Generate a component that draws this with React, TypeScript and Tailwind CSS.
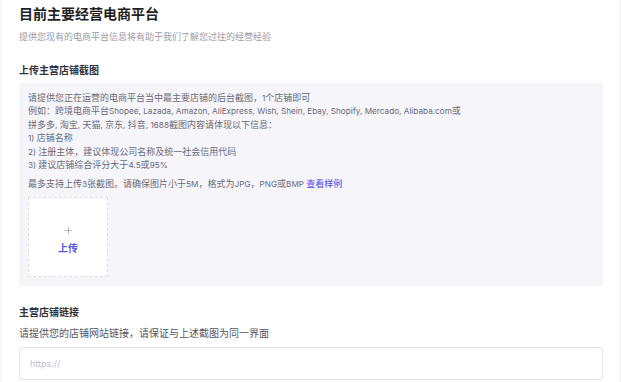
import { Plus } from 'lucide-react';

const lines = [
  '请提供您正在运营的电商平台当中最主要店铺的后台截图，1个店铺即可',
  '例如：跨境电商平台Shopee, Lazada, Amazon, AliExpress, Wish, Shein, Ebay, Shopify, Mercado, Alibaba.com或',
  '拼多多, 淘宝, 天猫, 京东, 抖音, 1688截图内容请体现以下信息：',
  '1) 店铺名称',
  '2) 注册主体，建议体现公司名称及统一社会信用代码',
  '3) 建议店铺综合评分大于4.5或95%',
];

// latin runs are set a touch smaller in Inter, like the original
function mix(text: string) {
  return text.split(/([A-Za-z0-9.,%() ]+)/).map((part, i) =>
    /^[A-Za-z0-9.,%() ]+$/.test(part) ? (
      <span key={i} className="font-['Inter',sans-serif] text-[8.2px] leading-[0]">
        {part}
      </span>
    ) : (
      part
    ),
  );
}

export default function App() {
  return (
    <div className="w-[621px] h-[382px] overflow-hidden bg-[#f5f5fa] px-[2px] font-['Inter','Noto_Sans_CJK_SC',sans-serif]">
      <div className="h-full bg-white pl-[17px] pr-[16px]">
        <h1 className="pt-[5px] text-[14px] leading-[18px] font-semibold text-[#1f1f24]">目前主要经营电商平台</h1>
        <p className="mt-[7px] text-[9px] leading-[13px] text-[#9a9aa8]">提供您现有的电商平台信息将有助于我们了解您过往的经营经验</p>

        <h2 className="mt-[20px] text-[10px] leading-[14px] font-semibold text-[#333339]">上传主营店铺截图</h2>
        <div className="mt-[6px] bg-[#f5f5fa] pl-[9px] pr-3 pt-[8px] pb-[9px] font-['Noto_Sans_CJK_SC',sans-serif]">
          <div className="text-[9px] leading-[13.4px] text-[#6b6b78]">
            {lines.map((l) => (
              <div key={l} className="h-[13.4px] whitespace-nowrap">
                {mix(l)}
              </div>
            ))}
          </div>
          <div className="mt-[6px] h-[13.5px] whitespace-nowrap text-[9px] leading-[13.5px] text-[#6b6b78]">
            {mix('最多支持上传3张截图。请确保图片小于5M，格式为JPG，PNG或BMP ')}
            <span className="text-[#4f46e5]">查看样例</span>
          </div>
          <div className="mt-[6px] w-[80px] h-[80px] bg-white border border-dashed border-[#dcdce6] flex flex-col items-center justify-center">
            <Plus className="w-[11px] h-[11px] text-[#8a8a95] mt-[6px]" strokeWidth={1.3} />
            <span className="mt-[5px] text-[10px] leading-[14px] font-semibold text-[#5b57e0]">上传</span>
          </div>
        </div>

        <h2 className="mt-[19px] text-[10px] leading-[14px] font-semibold text-[#333339]">主营店铺链接</h2>
        <p className="mt-[7px] text-[10px] leading-[14px] text-[#55555f]">请提供您的店铺网站链接，请保证与上述截图为同一界面</p>
        <input
          className="mt-[7px] w-full h-[33px] rounded-[3px] border border-[#e2e2f0] px-[10px] text-[9px] outline-none placeholder:text-[#c0c0cc]"
          placeholder="https://"
        />
      </div>
    </div>
  );
}
